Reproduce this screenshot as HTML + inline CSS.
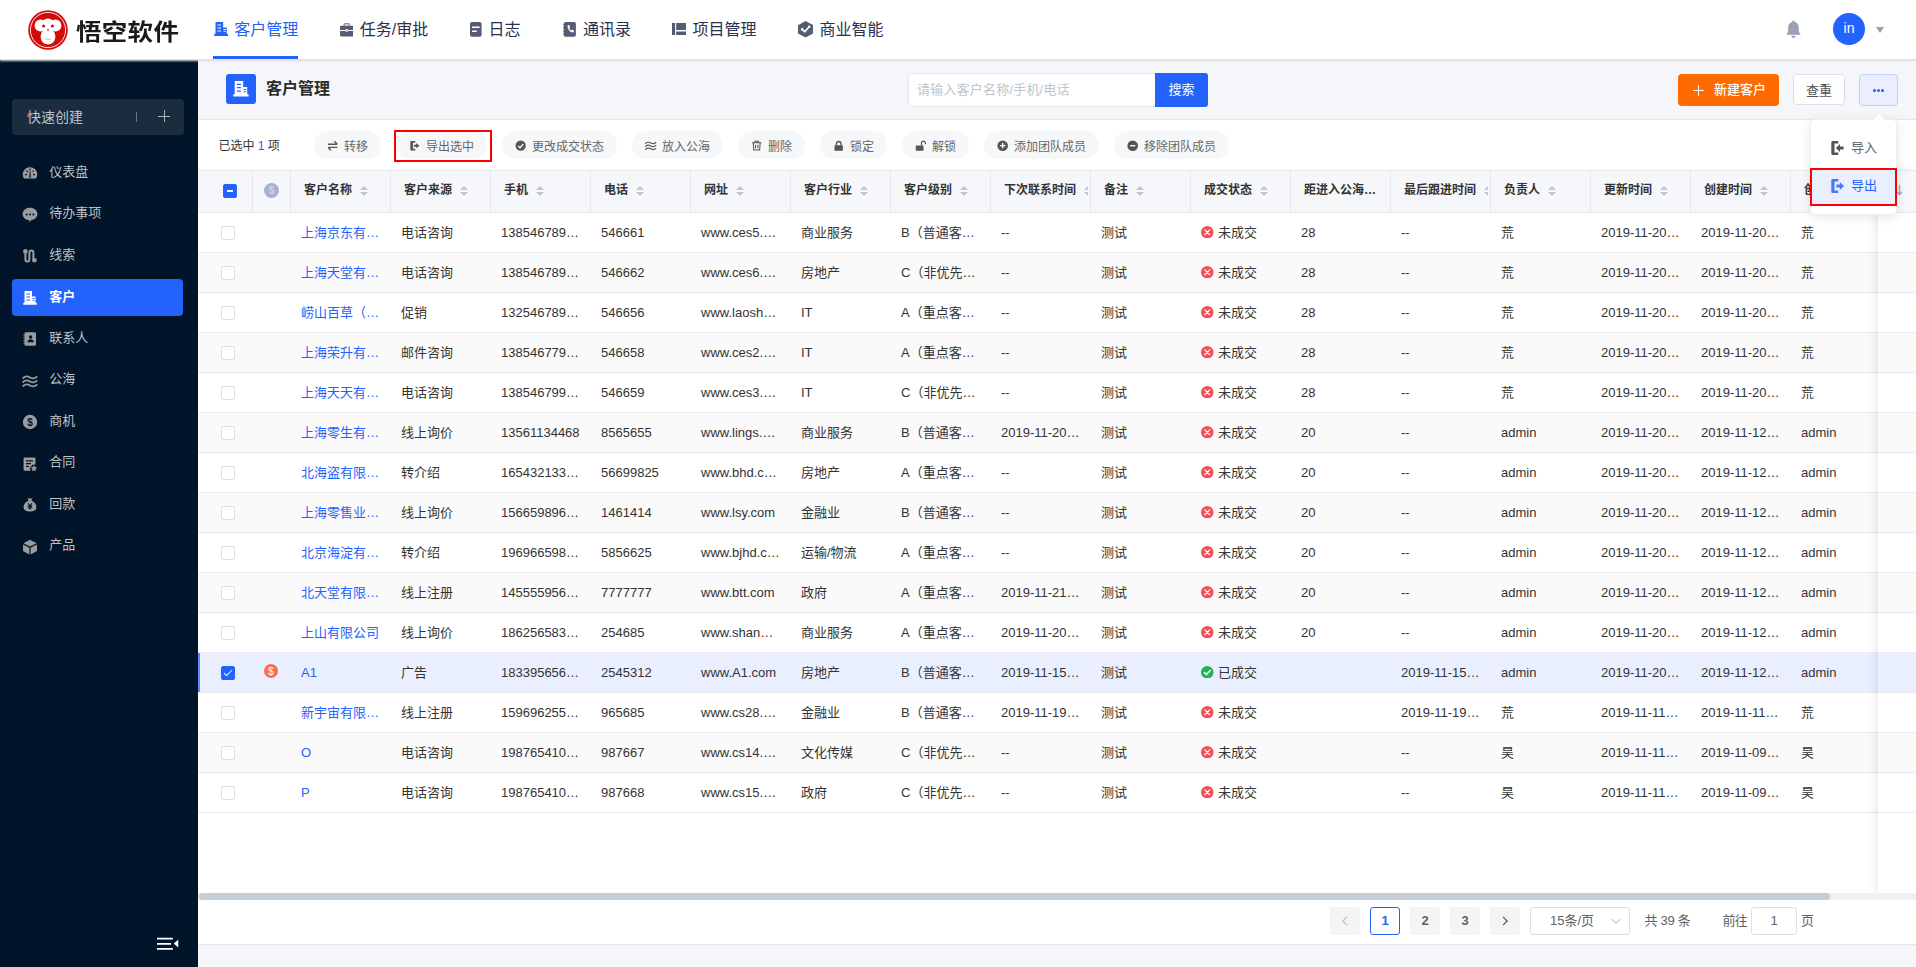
<!DOCTYPE html>
<html lang="zh-CN">
<head>
<meta charset="utf-8">
<title>客户管理</title>
<style>
*{box-sizing:border-box;margin:0;padding:0}
html,body{width:1916px;height:967px;overflow:hidden;background:#f5f6f9}
body{font-family:"Liberation Sans","Noto Sans CJK SC",sans-serif;font-size:13px;color:#333;position:relative}
svg{display:block}
i{font-style:normal}
/* top nav */
#nav{position:absolute;left:0;top:0;width:1916px;height:60px;background:#fff;z-index:20;border-bottom:1px solid #e1e3e8;box-shadow:0 1px 2px #dbdbdb}
#logo{position:absolute;left:28px;top:9.5px;width:40px;height:40px}
#brand{position:absolute;left:76px;top:12.5px;height:36px;line-height:36px;font-size:25.5px;font-weight:700;color:#1a1a1a;letter-spacing:0.3px;transform:scaleY(0.87);transform-origin:0 46%;white-space:nowrap;font-family:"Noto Sans CJK SC","Liberation Sans",sans-serif}
.ni{position:absolute;top:0;height:60px;line-height:58px;font-size:16px;color:#2a304d;white-space:nowrap;display:flex;align-items:center}
.ni svg{flex:none}
.ni.on{color:#2362fb}
.ni.on:after{content:"";position:absolute;left:0;right:0;top:56px;height:3px;background:#2362fb}
#bell{position:absolute;left:1784px;top:20px;width:19px;height:19px}
#avatar{position:absolute;left:1833px;top:13px;width:32px;height:32px;border-radius:50%;background:#2362fb;color:#fff;font-size:14px;line-height:31px;text-align:center}
#ucaret{position:absolute;left:1875.5px;top:27px;width:0;height:0;border:4.8px solid transparent;border-top:6px solid #a0a0a0;border-bottom:none}
/* sidebar */
#side{position:absolute;left:0;top:60px;width:198px;height:907px;background:#001529;z-index:10}
#quick{position:absolute;left:12px;top:39px;width:172px;height:36px;border-radius:4px;background:#1a2c3e;color:#bfc4ca;font-size:14px;line-height:36px;padding-left:15px}
#quick .div{position:absolute;left:124px;top:13px;width:1px;height:10px;background:#6d7883}
#quick .plus{position:absolute;left:146px;top:11.3px;width:12px;height:12px}
#quick .plus:before{content:"";position:absolute;left:0;top:5.5px;width:12px;height:1px;background:#a9afb6}
#quick .plus:after{content:"";position:absolute;left:5.5px;top:0;width:1px;height:12px;background:#a9afb6}
.mi{position:absolute;left:12px;width:171px;height:37px;border-radius:4px;color:#bcc1c7;font-size:13px;line-height:36px;padding-left:37.3px;white-space:nowrap}
.mi svg{position:absolute;left:10px;top:11.5px;width:16px;height:16px}
.mi.on{background:#2362fb;color:#fff;font-weight:bold}
.mi.on svg{left:11.3px;top:12px;width:14.2px;height:14.2px}
#collapse{position:absolute;left:157px;top:877.3px;width:22px;height:14px}
/* content */
#hd{position:absolute;left:198px;top:60px;width:1718px;height:60px;background:#f5f6f9;border-bottom:1px solid #e6e6e6}
#hdicon{position:absolute;left:28px;top:14px;width:30px;height:30px;border-radius:3px;background:#2362fb}
#hdicon svg{position:absolute;left:7px;top:7px;width:16px;height:16px}
#hdtitle{position:absolute;left:68px;top:14px;line-height:30px;font-size:16px;font-weight:bold;color:#2a2a2a}
#search{position:absolute;left:710px;top:13px;width:248px;height:34px;border:1px solid #e4e7ed;border-right:none;border-radius:4px 0 0 4px;background:#fff;color:#c0c4cc;font-size:13px;line-height:32px;padding-left:8px;letter-spacing:.2px}
#sbtn{position:absolute;left:957px;top:13px;width:53px;height:34px;border-radius:0 3px 3px 0;background:#2362fb;color:#fff;font-size:13px;font-weight:400;line-height:33px;text-align:center}
#newbtn{position:absolute;left:1480px;top:14px;width:101px;height:32px;border-radius:4px;background:#ff6a00;color:#fff;font-size:13px;font-weight:500;line-height:32px;padding-left:36px}
#newbtn:before{content:"";position:absolute;left:14.5px;top:15.5px;width:11px;height:1px;background:#fff}
#newbtn:after{content:"";position:absolute;left:19.5px;top:10.5px;width:1px;height:11px;background:#fff}
#dupbtn{position:absolute;left:1595px;top:14px;width:52px;height:31px;border-radius:4px;border:1px solid #dcdfe6;background:#fff;color:#555;font-size:13px;line-height:31px;text-align:center}
#morebtn{position:absolute;left:1661px;top:14px;width:39px;height:32px;border-radius:4px;border:1px solid #bdd0fe;background:#e9effe}
#morebtn i{position:absolute;top:14px;width:3px;height:3px;border-radius:50%;background:#2362fb}
/* card */
#card{position:absolute;left:198px;top:120px;width:1718px;height:825px;background:#fff;border-bottom:1px solid #e6e6e6;overflow:hidden}
#selbar{position:absolute;left:0;top:0;height:51px;width:1718px;font-size:12px;color:#333}
#selbar .cnt{position:absolute;left:20.5px;top:17.5px;line-height:17px;white-space:nowrap}
#selbar .cnt b{font-weight:normal;color:#2362fb}
.pill{position:absolute;top:11px;height:28px;border-radius:14px;background:#f6f7f9;color:#666;font-size:12px;line-height:22px;padding:4px 13px 0;white-space:nowrap;display:flex;align-items:center}
.pill svg{width:11.4px;height:11.4px;margin-left:.3px;margin-right:5.3px;margin-top:-2px;flex:none}
#redbox1{position:absolute;left:195.5px;top:9.5px;width:98px;height:32px;border:2px solid #fe0000}
/* table */
#tbl{position:absolute;left:0;top:50px;width:1718px;height:642px}
.thead,.tr{display:flex;width:2000px}
.thead{height:43px;background:#f5f7fa;border-top:1px solid #e6e9ef;border-bottom:1px solid #e6e9ef}
.th{width:100px;flex:none;height:41px;border-right:1px solid #e6e9ef;font-size:12px;font-weight:bold;color:#333;padding-left:13px;display:flex;align-items:center}
.th .cell{width:84px;height:39px;line-height:37px;padding-bottom:2px;overflow:hidden;white-space:nowrap;display:flex;align-items:center}
.th.c0{width:55px;padding-left:25px}
.th.c1{width:38px;padding-left:11px}
.caret{display:inline-block;position:relative;width:8px;height:10px;margin-left:8px;margin-top:0;flex:none}
.caret .up{position:absolute;left:0;top:0;border:4px solid transparent;border-bottom:4px solid #c0c4cc;border-top:none}
.caret .dn{position:absolute;left:0;top:6px;border:4px solid transparent;border-top:4px solid #c0c4cc;border-bottom:none}
.tr{height:40px;border-bottom:1px solid #e9ebf0;background:#fff}
.tr.stripe{background:#fafafa}
.tr.sel{background:#e9efff;box-shadow:inset 2px 0 0 #5b8afc}
.tr.sel2{background:#e9efff}
.td{width:100px;flex:none;height:39px;line-height:39px;padding-left:10px;white-space:nowrap;overflow:hidden;font-size:13px;color:#333;display:flex;align-items:center}
.td.c0{width:55px;padding-left:23px}
.td.c1{width:38px;padding-left:11px}
.td.lk{color:#2362fb}
.st{width:12.5px;height:12.5px;margin-right:4.5px;margin-top:-1px;flex:none}
.dollar{width:15px;height:15px;margin-top:-2px;margin-left:-0.5px}
.dollar2{width:14px;height:14px;margin-top:-4px}
.cb{display:block;width:14px;height:14px;border:1px solid #dcdfe6;border-radius:2px;background:#fff;position:relative;margin-top:1px}
.cb.ind,.cb.chk{background:#2362fb;border-color:#2362fb}
.cb.ind{margin-top:-2px}
.cb.ind:after{content:"";position:absolute;left:3px;top:5px;width:6px;height:2px;background:#fff}
.cb.chk:after{content:"";position:absolute;left:4px;top:1px;width:3px;height:7px;border:solid #fff;border-width:0 1.5px 1.5px 0;transform:rotate(45deg)}
/* fixed right column */
#fixr{position:absolute;left:1680px;top:50px;width:38px;height:723px;background:#fff;box-shadow:-3px 0 8px rgba(0,0,0,.08);overflow:visible}
#fixr .tr{width:38px}
#fixr .seticon{position:absolute;left:13px;top:14px;width:12px;height:12px}
#fixr .h{height:43px;background:#f5f7fa;border-top:1px solid #e6e9ef;border-bottom:1px solid #e6e9ef}
/* scrollbar */
#sbar{position:absolute;left:0;top:773px;width:1718px;height:7px;background:#f0f1f3}
#sbar i{position:absolute;left:1px;top:0;width:1631px;height:7px;border-radius:4px;background:#c4cdd7}
/* pagination */
#pg{position:absolute;left:0;top:787px;width:1718px;height:28px;font-size:13px;color:#606266}
.pb{position:absolute;top:0;width:30px;height:28px;border-radius:2px;background:#f4f4f5;color:#606266;font-weight:bold;text-align:center;line-height:28px}
.pb.on{background:#fff;border:1px solid #2362fb;color:#2362fb;line-height:26px;border-radius:3px}
.pb svg{position:absolute;left:11px;top:9px;width:8px;height:10px}
#psel{position:absolute;left:1332px;top:0;width:100px;height:28px;border:1px solid #dcdfe6;border-radius:3px;line-height:26px;padding-left:19px;color:#606266}
#psel svg{position:absolute;left:80px;top:10px;width:10px;height:7px}
#ptotal{position:absolute;left:1446.5px;top:0;line-height:28px;white-space:nowrap;letter-spacing:-0.3px}
#pgo{position:absolute;left:1524.5px;top:0;line-height:28px;white-space:nowrap;letter-spacing:-0.8px}
#pinp{position:absolute;left:1553px;top:0;width:46px;height:28px;border:1px solid #dcdfe6;border-radius:3px;text-align:center;line-height:26px}
#pye{position:absolute;left:1603px;top:0;line-height:28px}
/* popover */
#pop{position:absolute;left:1810px;top:119px;width:87px;height:96px;background:#fff;border-radius:4px;box-shadow:0 2px 12px rgba(0,0,0,.1);border:1px solid #ebeef5;z-index:30;font-size:13px}
#pop .arrow{position:absolute;left:62px;top:-6px;width:0;height:0;border:6px solid transparent;border-top:none;border-bottom:6px solid #fff;filter:drop-shadow(0 -1px 0 #ebeef5)}
.pi{position:absolute;left:-1px;width:87px;height:38px;line-height:38px;padding-left:41px;color:#606266;white-space:nowrap}
.pi svg{position:absolute;left:21px;top:12px;width:13px;height:14px}
.pi.on{background:#e9effe;color:#2362fb;border:2px solid #fe0000;line-height:32px;padding-left:39px}
.pi.on svg{left:19px;top:9px}
</style>
</head>
<body>
<div id="nav">
  <svg id="logo" viewBox="0 0 40 40">
    <circle cx="20" cy="20" r="19.8" fill="#d20a0a"/>
    <circle cx="20" cy="20" r="17.6" fill="none" stroke="#fff" stroke-width="0.9"/>
    <circle cx="12.6" cy="15.6" r="6" fill="#fff"/>
    <circle cx="27.4" cy="15.6" r="6" fill="#fff"/>
    <circle cx="20" cy="15.6" r="7" fill="#fff"/>
    <ellipse cx="20" cy="26.5" rx="7.4" ry="8" fill="#fff"/>
    <circle cx="15.6" cy="16" r="1.5" fill="#d20a0a"/>
    <circle cx="24.4" cy="16" r="1.5" fill="#d20a0a"/>
    <circle cx="20" cy="19.8" r="0.9" fill="#d20a0a"/>
    <path d="M17 28.4q3 3 6 0" stroke="#e89a9a" stroke-width="0.9" fill="none" stroke-linecap="round"/>
  </svg>
  <div id="brand">悟空软件</div>
  <div class="ni on" style="left:213px"><svg style="margin-left:1.3px;width:14.3px;height:14.3px;margin-right:5.6px;margin-top:-1px" viewBox="0 0 16 16"><path fill="#2362fb" d="M1.7 .1h8.5v6h4v7.1h1.4v2.4H.3v-2.4h1.4zM3.8 2.8v1.2h4.1V2.8zm0 3.3v1.2h4.1V6.1zm0 3.4v1.2h4.1V9.5zm6.8-1.6v1h2.6v-1zm0 2.4v1h2.6v-1z"/></svg>客户管理</div>
  <div class="ni" style="left:339px"><svg style="margin-left:.9px;width:13.4px;height:13.4px;margin-right:6.5px;margin-top:0" viewBox="0 0 14 14"><path fill="none" stroke="#8a8ea3" stroke-width="1.5" d="M4.4 3V1.6a.8.8 0 0 1 .8-.8h3.6a.8.8 0 0 1 .8.8V3"/><path fill="#555a75" d="M1.2 2.8h11.6A1.2 1.2 0 0 1 14 4v3.3H0V4a1.2 1.2 0 0 1 1.2-1.2zM0 8.3h14v4.5a1.2 1.2 0 0 1-1.2 1.2H1.2A1.2 1.2 0 0 1 0 12.8z"/><circle cx="7" cy="7.8" r="1.5" fill="#fff"/><circle cx="7" cy="7.8" r=".6" fill="#555a75"/></svg>任务/审批</div>
  <div class="ni" style="left:469px"><svg style="margin-left:1.3px;width:11.6px;height:14.7px;margin-right:6.5px;margin-top:-1px" viewBox="0 0 11.6 14.7"><rect width="11.6" height="14.7" rx="2" fill="#555a75"/><path stroke="#fff" stroke-width="1.5" d="M2 5.3h7.6M2 9.3h4.8"/></svg>日志</div>
  <div class="ni" style="left:562px"><svg style="margin-left:1px;width:12.9px;height:14.7px;margin-right:7px;margin-top:-1px" viewBox="0 0 12.9 14.7"><rect x=".8" width="12.1" height="14.7" rx="1.8" fill="#555a75"/><path stroke="#555a75" stroke-width="1" d="M0 2.6h2M0 5.8h2M0 9h2M0 12.2h2"/><path fill="#fff" d="M4.6 3.4l1.6-.5 1 2.2-1 .8c.4 1.1 1.1 2 2 2.6l.9-.9 2 1.2-.7 1.6C7.3 10.6 4.2 7 4.6 3.4z"/></svg>通讯录</div>
  <div class="ni" style="left:671px"><svg style="margin-left:.7px;width:14.4px;height:12px;margin-right:6.4px;margin-top:-1.5px" viewBox="0 0 14.4 12"><path fill="#555a75" d="M0 0h3.1v12H0zM4.2 0h10.2v7H4.2zM4.2 8.4h10.2V12H4.2z"/></svg>项目管理</div>
  <div class="ni" style="left:797px"><svg style="margin-left:1px;width:15.1px;height:16.6px;margin-right:6.3px;margin-top:-1px" viewBox="0 0 15.1 16.6"><path fill="#555a75" d="M7.55 0l7.55 4.15v8.3L7.55 16.6 0 12.45v-8.3z"/><path fill="none" stroke="#fff" stroke-width="1.7" stroke-linecap="round" stroke-linejoin="round" d="M4.2 8.4l2.6 2.4 4.4-5"/><circle cx="4.2" cy="8.4" r="1.3" fill="#fff"/><circle cx="11.2" cy="5.8" r="1.3" fill="#fff"/></svg>商业智能</div>
  <svg id="bell" viewBox="0 0 18 19"><path fill="#9aa1b5" d="M9 .8c.8 0 1.4.6 1.4 1.3 2.4.7 3.9 2.8 3.9 5.3v3.7c0 .9.5 1.8 1.4 2.4.5.3.4 1.2-.3 1.2H2.6c-.7 0-.8-.9-.3-1.2.9-.6 1.4-1.5 1.4-2.4V7.4c0-2.5 1.5-4.6 3.9-5.3C7.6 1.4 8.2.8 9 .8zM6.8 15.8h4.4c0 1.2-1 2.2-2.2 2.2s-2.2-1-2.2-2.2z"/></svg>
  <div id="avatar">in</div>
  <div id="ucaret"></div>
</div>

<div id="side">
  <div id="quick">快速创建<span class="div"></span><span class="plus"></span></div>
  <div class="mi" style="top:93.5px"><svg viewBox="0 0 16 16"><path fill="#9c9c9e" d="M8 2.2a7.2 7.2 0 0 1 7.2 7.2c0 1.5-.4 2.8-1.2 4H2A7.2 7.2 0 0 1 8 2.2z"/><path stroke="#001529" stroke-width="1.1" d="M8 3.4v2M3 9.6h2M11 9.6h2M4.4 5.6l1.4 1.4M11.6 5.6l-1 1"/><path fill="#001529" d="M7.2 12.6l.4-6h.8l.4 6z"/></svg>仪表盘</div>
  <div class="mi" style="top:135px"><svg viewBox="0 0 16 16"><path fill="#9c9c9e" d="M8 .8c4.1 0 7.4 2.7 7.4 6.2 0 3.2-2.8 5.8-6.4 6.1L8 15.3l-1-2.2C3.4 12.8.6 10.2.6 7 .6 3.5 3.9.8 8 .8z"/><circle cx="4.6" cy="7.6" r="1" fill="#001529"/><circle cx="8" cy="7.6" r="1" fill="#001529"/><circle cx="11.4" cy="7.6" r="1" fill="#001529"/></svg>待办事项</div>
  <div class="mi" style="top:176.5px"><svg viewBox="0 0 16 16"><path fill="none" stroke="#9c9c9e" stroke-width="2" d="M3.4 4v7.5a2 2 0 0 0 4 0V4.5a2 2 0 0 1 4 0v7"/><circle cx="3.4" cy="3.4" r="2.3" fill="#9c9c9e"/><circle cx="12.4" cy="12.2" r="2.3" fill="#9c9c9e"/></svg>线索</div>
  <div class="mi on" style="top:219px"><svg viewBox="0 0 16 16"><path fill="#fff" d="M1.7 .1h8.5v6h4v7.1h1.4v2.4H.3v-2.4h1.4zM3.8 2.8v1.2h4.1V2.8zm0 3.3v1.2h4.1V6.1zm0 3.4v1.2h4.1V9.5zm6.8-1.6v1h2.6v-1zm0 2.4v1h2.6v-1z"/></svg>客户</div>
  <div class="mi" style="top:259.5px"><svg viewBox="0 0 16 16"><path fill="#9c9c9e" d="M4 1.2h8.6a1.4 1.4 0 0 1 1.4 1.4v10.8a1.4 1.4 0 0 1-1.4 1.4H4a1.4 1.4 0 0 1-1.4-1.4V2.6A1.4 1.4 0 0 1 4 1.2z"/><circle cx="8.6" cy="6" r="1.7" fill="#001529"/><path fill="#001529" d="M5.4 11.2c0-1.9 1.4-3 3.2-3s3.2 1.1 3.2 3z"/><path stroke="#9c9c9e" stroke-width="1" d="M1.4 4h2M1.4 6.7h2M1.4 9.4h2M1.4 12h2"/></svg>联系人</div>
  <div class="mi" style="top:301px"><svg viewBox="0 0 16 16"><path fill="none" stroke="#9c9c9e" stroke-width="1.7" stroke-linecap="round" d="M1.2 5c2.2-2 4.5-2 6.8-.6s4.6 1.4 6.8-.6M1.2 9c2.2-2 4.5-2 6.8-.6s4.6 1.4 6.8-.6M1.2 13c2.2-2 4.5-2 6.8-.6s4.6 1.4 6.8-.6"/></svg>公海</div>
  <div class="mi" style="top:342.5px"><svg viewBox="0 0 16 16"><circle cx="8" cy="8" r="7.2" fill="#9c9c9e"/><text x="8" y="11.6" font-size="10" font-weight="bold" text-anchor="middle" fill="#001529" font-family="Liberation Sans, sans-serif">$</text></svg>商机</div>
  <div class="mi" style="top:384px"><svg viewBox="0 0 16 16"><path fill="#9c9c9e" d="M2.6 1.4h9.8a1 1 0 0 1 1 1v6.2l-3 .2-2.4 3 .6 3H2.6a1 1 0 0 1-1-1V2.4a1 1 0 0 1 1-1z"/><path stroke="#001529" stroke-width="1.2" d="M4 4.8h7M4 7.6h5M4 10.4h3"/><path fill="#9c9c9e" d="M12 9l1 2.1 2.3.3-1.7 1.6.4 2.3-2-1.1-2 1.1.4-2.3-1.7-1.6 2.3-.3z"/></svg>合同</div>
  <div class="mi" style="top:425.5px"><svg viewBox="0 0 16 16"><path fill="#9c9c9e" d="M5.6 1.4h4.8l-1 2.4c3 1 5 3.6 5 6.4 0 2.6-2 4.4-6.4 4.4S1.6 12.8 1.6 10.2c0-2.8 2-5.4 5-6.4z"/><path stroke="#001529" stroke-width="1.1" fill="none" d="M6 6.4l2 2.4 2-2.4M8 8.8v3.6M5.8 9.4h4.4M5.8 11h4.4"/></svg>回款</div>
  <div class="mi" style="top:467px"><svg viewBox="0 0 16 16"><path fill="#9c9c9e" d="M8 .8l6.6 3.4L8 7.6 1.4 4.2zM1 5.4l6.4 3.3v6.7L1 12zM15 5.4V12l-6.4 3.4V8.7z"/></svg>产品</div>
  <svg id="collapse" viewBox="0 0 22 14"><path fill="#fff" d="M0 .8h15.8v1.7H0zM0 6h14v1.7H0zM0 11h15.8v1.7H0zM21.3 2.7v7.8L16.7 6.6z"/></svg>
</div>

<div id="hd">
  <div id="hdicon"><svg viewBox="0 0 16 16"><path fill="#fff" d="M1.7 .1h8.5v6h4v7.1h1.4v2.4H.3v-2.4h1.4zM3.8 2.8v1.2h4.1V2.8zm0 3.3v1.2h4.1V6.1zm0 3.4v1.2h4.1V9.5zm6.8-1.6v1h2.6v-1zm0 2.4v1h2.6v-1z"/></svg></div>
  <div id="hdtitle">客户管理</div>
  <div id="search">请输入客户名称/手机/电话</div>
  <div id="sbtn">搜索</div>
  <div id="newbtn">新建客户</div>
  <div id="dupbtn">查重</div>
  <div id="morebtn"><i style="left:13px"></i><i style="left:17px"></i><i style="left:21px"></i></div>
</div>

<div id="card">
  <div id="selbar">
    <div class="cnt">已选中 <b>1</b> 项</div>
    <div class="pill" style="left:116px"><svg viewBox="0 0 12 12"><path fill="none" stroke="#555" stroke-width="1.5" d="M1 4.4h9.8M7.8 1.4l3 3M11 7.8H1.2M4.2 10.8l-3-3"/></svg>转移</div>
    <div class="pill" style="left:198px"><svg viewBox="0 0 12 12"><path fill="#555" d="M2.4 1h4.2v1.8H4.2v6.4h2.4V11H2.4a1 1 0 0 1-1-1V2a1 1 0 0 1 1-1zM7.6 3.2L11 6 7.6 8.8V7H5.2V5h2.4z"/></svg>导出选中</div>
    <div class="pill" style="left:304px"><svg viewBox="0 0 12 12"><circle cx="6" cy="6" r="5.4" fill="#555"/><path fill="none" stroke="#fff" stroke-width="1.4" d="M3.4 6.2l1.9 1.9 3.4-3.8"/></svg>更改成交状态</div>
    <div class="pill" style="left:434px"><svg viewBox="0 0 12 12"><path fill="none" stroke="#555" stroke-width="1.2" stroke-linecap="round" d="M.6 3.6c1.7-1.6 3.5-1.6 5.4-.5s3.7 1.1 5.4-.5M.6 6.7c1.7-1.6 3.5-1.6 5.4-.5s3.7 1.1 5.4-.5M.6 9.8c1.7-1.6 3.5-1.6 5.4-.5s3.7 1.1 5.4-.5"/></svg>放入公海</div>
    <div class="pill" style="left:540px"><svg viewBox="0 0 12 12"><path fill="none" stroke="#555" stroke-width="1.1" d="M1 3h10M4.2 3V1.4h3.6V3M2.4 3l.5 7.6h6.2L9.6 3M4.8 5v3.8M7.2 5v3.8"/></svg>删除</div>
    <div class="pill" style="left:622px"><svg viewBox="0 0 12 12"><path fill="#555" d="M2.2 5.6h7.6a.6.6 0 0 1 .6.6v4.6a.6.6 0 0 1-.6.6H2.2a.6.6 0 0 1-.6-.6V6.2a.6.6 0 0 1 .6-.6z"/><path fill="none" stroke="#555" stroke-width="1.4" d="M3.6 5.8V4a2.4 2.4 0 0 1 4.8 0v1.8"/></svg>锁定</div>
    <div class="pill" style="left:704px"><svg viewBox="0 0 12 12"><path fill="#555" d="M1.4 5.8h7a.6.6 0 0 1 .6.6v4.2a.6.6 0 0 1-.6.6h-7a.6.6 0 0 1-.6-.6V6.4a.6.6 0 0 1 .6-.6z"/><path fill="none" stroke="#555" stroke-width="1.3" d="M6.8 5.8V3.4a2.1 2.1 0 0 1 4.2 0v1"/></svg>解锁</div>
    <div class="pill" style="left:786px"><svg viewBox="0 0 12 12"><circle cx="6" cy="6" r="5.6" fill="#555"/><path stroke="#fff" stroke-width="1.4" d="M3.2 6h5.6M6 3.2v5.6"/></svg>添加团队成员</div>
    <div class="pill" style="left:916px"><svg viewBox="0 0 12 12"><circle cx="6" cy="6" r="5.6" fill="#555"/><path stroke="#fff" stroke-width="1.4" d="M3.2 6h5.6"/></svg>移除团队成员</div>
    <div id="redbox1"></div>
  </div>
  <div id="tbl">
<div class="thead">
<div class="th c0"><span class="cb ind"></span></div>
<div class="th c1"><svg class="dollar" viewBox="0 0 16 16"><circle cx="8" cy="8" r="8" fill="#a6b0d0"/><text x="8" y="12" font-size="11" text-anchor="middle" fill="#cdd3e6" font-family="Liberation Sans, sans-serif">$</text></svg></div>
<div class="th"><div class="cell"><span class="ht">客户名称</span><span class="caret"><i class="up"></i><i class="dn"></i></span></div></div>
<div class="th"><div class="cell"><span class="ht">客户来源</span><span class="caret"><i class="up"></i><i class="dn"></i></span></div></div>
<div class="th"><div class="cell"><span class="ht">手机</span><span class="caret"><i class="up"></i><i class="dn"></i></span></div></div>
<div class="th"><div class="cell"><span class="ht">电话</span><span class="caret"><i class="up"></i><i class="dn"></i></span></div></div>
<div class="th"><div class="cell"><span class="ht">网址</span><span class="caret"><i class="up"></i><i class="dn"></i></span></div></div>
<div class="th"><div class="cell"><span class="ht">客户行业</span><span class="caret"><i class="up"></i><i class="dn"></i></span></div></div>
<div class="th"><div class="cell"><span class="ht">客户级别</span><span class="caret"><i class="up"></i><i class="dn"></i></span></div></div>
<div class="th"><div class="cell"><span class="ht">下次联系时间</span><span class="caret"><i class="up"></i><i class="dn"></i></span></div></div>
<div class="th"><div class="cell"><span class="ht">备注</span><span class="caret"><i class="up"></i><i class="dn"></i></span></div></div>
<div class="th"><div class="cell"><span class="ht">成交状态</span><span class="caret"><i class="up"></i><i class="dn"></i></span></div></div>
<div class="th"><div class="cell"><span class="ht">距进入公海…</span></div></div>
<div class="th"><div class="cell"><span class="ht">最后跟进时间</span><span class="caret"><i class="up"></i><i class="dn"></i></span></div></div>
<div class="th"><div class="cell"><span class="ht">负责人</span><span class="caret"><i class="up"></i><i class="dn"></i></span></div></div>
<div class="th"><div class="cell"><span class="ht">更新时间</span><span class="caret"><i class="up"></i><i class="dn"></i></span></div></div>
<div class="th"><div class="cell"><span class="ht">创建时间</span><span class="caret"><i class="up"></i><i class="dn"></i></span></div></div>
<div class="th"><div class="cell"><span class="ht">创建人</span><span class="caret"><i class="up"></i><i class="dn"></i></span></div></div>
</div>
<div class="tr">
<div class="td c0"><span class="cb"></span></div>
<div class="td c1"></div>
<div class="td lk">上海京东有…</div>
<div class="td">电话咨询</div>
<div class="td">138546789…</div>
<div class="td">546661</div>
<div class="td">www.ces5.…</div>
<div class="td">商业服务</div>
<div class="td">B（普通客…</div>
<div class="td">--</div>
<div class="td">测试</div>
<div class="td"><svg class="st" viewBox="0 0 12 12"><circle cx="6" cy="6" r="6" fill="#f5505a"/><path d="M3.7 3.7l4.6 4.6M8.3 3.7L3.7 8.3" stroke="#fff" stroke-width="1.3" stroke-linecap="round"/></svg><span>未成交</span></div>
<div class="td">28</div>
<div class="td">--</div>
<div class="td">荒</div>
<div class="td">2019-11-20…</div>
<div class="td">2019-11-20…</div>
<div class="td">荒</div>
</div>
<div class="tr stripe">
<div class="td c0"><span class="cb"></span></div>
<div class="td c1"></div>
<div class="td lk">上海天堂有…</div>
<div class="td">电话咨询</div>
<div class="td">138546789…</div>
<div class="td">546662</div>
<div class="td">www.ces6.…</div>
<div class="td">房地产</div>
<div class="td">C（非优先…</div>
<div class="td">--</div>
<div class="td">测试</div>
<div class="td"><svg class="st" viewBox="0 0 12 12"><circle cx="6" cy="6" r="6" fill="#f5505a"/><path d="M3.7 3.7l4.6 4.6M8.3 3.7L3.7 8.3" stroke="#fff" stroke-width="1.3" stroke-linecap="round"/></svg><span>未成交</span></div>
<div class="td">28</div>
<div class="td">--</div>
<div class="td">荒</div>
<div class="td">2019-11-20…</div>
<div class="td">2019-11-20…</div>
<div class="td">荒</div>
</div>
<div class="tr">
<div class="td c0"><span class="cb"></span></div>
<div class="td c1"></div>
<div class="td lk">崂山百草（…</div>
<div class="td">促销</div>
<div class="td">132546789…</div>
<div class="td">546656</div>
<div class="td">www.laosh…</div>
<div class="td">IT</div>
<div class="td">A（重点客…</div>
<div class="td">--</div>
<div class="td">测试</div>
<div class="td"><svg class="st" viewBox="0 0 12 12"><circle cx="6" cy="6" r="6" fill="#f5505a"/><path d="M3.7 3.7l4.6 4.6M8.3 3.7L3.7 8.3" stroke="#fff" stroke-width="1.3" stroke-linecap="round"/></svg><span>未成交</span></div>
<div class="td">28</div>
<div class="td">--</div>
<div class="td">荒</div>
<div class="td">2019-11-20…</div>
<div class="td">2019-11-20…</div>
<div class="td">荒</div>
</div>
<div class="tr stripe">
<div class="td c0"><span class="cb"></span></div>
<div class="td c1"></div>
<div class="td lk">上海荣升有…</div>
<div class="td">邮件咨询</div>
<div class="td">138546779…</div>
<div class="td">546658</div>
<div class="td">www.ces2.…</div>
<div class="td">IT</div>
<div class="td">A（重点客…</div>
<div class="td">--</div>
<div class="td">测试</div>
<div class="td"><svg class="st" viewBox="0 0 12 12"><circle cx="6" cy="6" r="6" fill="#f5505a"/><path d="M3.7 3.7l4.6 4.6M8.3 3.7L3.7 8.3" stroke="#fff" stroke-width="1.3" stroke-linecap="round"/></svg><span>未成交</span></div>
<div class="td">28</div>
<div class="td">--</div>
<div class="td">荒</div>
<div class="td">2019-11-20…</div>
<div class="td">2019-11-20…</div>
<div class="td">荒</div>
</div>
<div class="tr">
<div class="td c0"><span class="cb"></span></div>
<div class="td c1"></div>
<div class="td lk">上海天天有…</div>
<div class="td">电话咨询</div>
<div class="td">138546799…</div>
<div class="td">546659</div>
<div class="td">www.ces3.…</div>
<div class="td">IT</div>
<div class="td">C（非优先…</div>
<div class="td">--</div>
<div class="td">测试</div>
<div class="td"><svg class="st" viewBox="0 0 12 12"><circle cx="6" cy="6" r="6" fill="#f5505a"/><path d="M3.7 3.7l4.6 4.6M8.3 3.7L3.7 8.3" stroke="#fff" stroke-width="1.3" stroke-linecap="round"/></svg><span>未成交</span></div>
<div class="td">28</div>
<div class="td">--</div>
<div class="td">荒</div>
<div class="td">2019-11-20…</div>
<div class="td">2019-11-20…</div>
<div class="td">荒</div>
</div>
<div class="tr stripe">
<div class="td c0"><span class="cb"></span></div>
<div class="td c1"></div>
<div class="td lk">上海零生有…</div>
<div class="td">线上询价</div>
<div class="td">13561134468</div>
<div class="td">8565655</div>
<div class="td">www.lings.…</div>
<div class="td">商业服务</div>
<div class="td">B（普通客…</div>
<div class="td">2019-11-20…</div>
<div class="td">测试</div>
<div class="td"><svg class="st" viewBox="0 0 12 12"><circle cx="6" cy="6" r="6" fill="#f5505a"/><path d="M3.7 3.7l4.6 4.6M8.3 3.7L3.7 8.3" stroke="#fff" stroke-width="1.3" stroke-linecap="round"/></svg><span>未成交</span></div>
<div class="td">20</div>
<div class="td">--</div>
<div class="td">admin</div>
<div class="td">2019-11-20…</div>
<div class="td">2019-11-12…</div>
<div class="td">admin</div>
</div>
<div class="tr">
<div class="td c0"><span class="cb"></span></div>
<div class="td c1"></div>
<div class="td lk">北海盗有限…</div>
<div class="td">转介绍</div>
<div class="td">165432133…</div>
<div class="td">56699825</div>
<div class="td">www.bhd.c…</div>
<div class="td">房地产</div>
<div class="td">A（重点客…</div>
<div class="td">--</div>
<div class="td">测试</div>
<div class="td"><svg class="st" viewBox="0 0 12 12"><circle cx="6" cy="6" r="6" fill="#f5505a"/><path d="M3.7 3.7l4.6 4.6M8.3 3.7L3.7 8.3" stroke="#fff" stroke-width="1.3" stroke-linecap="round"/></svg><span>未成交</span></div>
<div class="td">20</div>
<div class="td">--</div>
<div class="td">admin</div>
<div class="td">2019-11-20…</div>
<div class="td">2019-11-12…</div>
<div class="td">admin</div>
</div>
<div class="tr stripe">
<div class="td c0"><span class="cb"></span></div>
<div class="td c1"></div>
<div class="td lk">上海零售业…</div>
<div class="td">线上询价</div>
<div class="td">156659896…</div>
<div class="td">1461414</div>
<div class="td">www.lsy.com</div>
<div class="td">金融业</div>
<div class="td">B（普通客…</div>
<div class="td">--</div>
<div class="td">测试</div>
<div class="td"><svg class="st" viewBox="0 0 12 12"><circle cx="6" cy="6" r="6" fill="#f5505a"/><path d="M3.7 3.7l4.6 4.6M8.3 3.7L3.7 8.3" stroke="#fff" stroke-width="1.3" stroke-linecap="round"/></svg><span>未成交</span></div>
<div class="td">20</div>
<div class="td">--</div>
<div class="td">admin</div>
<div class="td">2019-11-20…</div>
<div class="td">2019-11-12…</div>
<div class="td">admin</div>
</div>
<div class="tr">
<div class="td c0"><span class="cb"></span></div>
<div class="td c1"></div>
<div class="td lk">北京海淀有…</div>
<div class="td">转介绍</div>
<div class="td">196966598…</div>
<div class="td">5856625</div>
<div class="td">www.bjhd.c…</div>
<div class="td">运输/物流</div>
<div class="td">A（重点客…</div>
<div class="td">--</div>
<div class="td">测试</div>
<div class="td"><svg class="st" viewBox="0 0 12 12"><circle cx="6" cy="6" r="6" fill="#f5505a"/><path d="M3.7 3.7l4.6 4.6M8.3 3.7L3.7 8.3" stroke="#fff" stroke-width="1.3" stroke-linecap="round"/></svg><span>未成交</span></div>
<div class="td">20</div>
<div class="td">--</div>
<div class="td">admin</div>
<div class="td">2019-11-20…</div>
<div class="td">2019-11-12…</div>
<div class="td">admin</div>
</div>
<div class="tr stripe">
<div class="td c0"><span class="cb"></span></div>
<div class="td c1"></div>
<div class="td lk">北天堂有限…</div>
<div class="td">线上注册</div>
<div class="td">145555956…</div>
<div class="td">7777777</div>
<div class="td">www.btt.com</div>
<div class="td">政府</div>
<div class="td">A（重点客…</div>
<div class="td">2019-11-21…</div>
<div class="td">测试</div>
<div class="td"><svg class="st" viewBox="0 0 12 12"><circle cx="6" cy="6" r="6" fill="#f5505a"/><path d="M3.7 3.7l4.6 4.6M8.3 3.7L3.7 8.3" stroke="#fff" stroke-width="1.3" stroke-linecap="round"/></svg><span>未成交</span></div>
<div class="td">20</div>
<div class="td">--</div>
<div class="td">admin</div>
<div class="td">2019-11-20…</div>
<div class="td">2019-11-12…</div>
<div class="td">admin</div>
</div>
<div class="tr">
<div class="td c0"><span class="cb"></span></div>
<div class="td c1"></div>
<div class="td lk">上山有限公司</div>
<div class="td">线上询价</div>
<div class="td">186256583…</div>
<div class="td">254685</div>
<div class="td">www.shan…</div>
<div class="td">商业服务</div>
<div class="td">A（重点客…</div>
<div class="td">2019-11-20…</div>
<div class="td">测试</div>
<div class="td"><svg class="st" viewBox="0 0 12 12"><circle cx="6" cy="6" r="6" fill="#f5505a"/><path d="M3.7 3.7l4.6 4.6M8.3 3.7L3.7 8.3" stroke="#fff" stroke-width="1.3" stroke-linecap="round"/></svg><span>未成交</span></div>
<div class="td">20</div>
<div class="td">--</div>
<div class="td">admin</div>
<div class="td">2019-11-20…</div>
<div class="td">2019-11-12…</div>
<div class="td">admin</div>
</div>
<div class="tr stripe sel">
<div class="td c0"><span class="cb chk"></span></div>
<div class="td c1"><svg class="dollar2" viewBox="0 0 14 14"><circle cx="7" cy="7" r="7" fill="#ff6f47"/><text x="7" y="10.8" font-size="10.5" text-anchor="middle" fill="#fff" font-family="Liberation Sans, sans-serif">$</text></svg></div>
<div class="td lk">A1</div>
<div class="td">广告</div>
<div class="td">183395656…</div>
<div class="td">2545312</div>
<div class="td">www.A1.com</div>
<div class="td">房地产</div>
<div class="td">B（普通客…</div>
<div class="td">2019-11-15…</div>
<div class="td">测试</div>
<div class="td"><svg class="st" viewBox="0 0 12 12"><circle cx="6" cy="6" r="6" fill="#20b559"/><path d="M3.2 6.2l2 2 3.6-3.9" stroke="#fff" stroke-width="1.4" fill="none" stroke-linecap="round" stroke-linejoin="round"/></svg><span>已成交</span></div>
<div class="td"></div>
<div class="td">2019-11-15…</div>
<div class="td">admin</div>
<div class="td">2019-11-20…</div>
<div class="td">2019-11-12…</div>
<div class="td">admin</div>
</div>
<div class="tr">
<div class="td c0"><span class="cb"></span></div>
<div class="td c1"></div>
<div class="td lk">新宇宙有限…</div>
<div class="td">线上注册</div>
<div class="td">159696255…</div>
<div class="td">965685</div>
<div class="td">www.cs28.…</div>
<div class="td">金融业</div>
<div class="td">B（普通客…</div>
<div class="td">2019-11-19…</div>
<div class="td">测试</div>
<div class="td"><svg class="st" viewBox="0 0 12 12"><circle cx="6" cy="6" r="6" fill="#f5505a"/><path d="M3.7 3.7l4.6 4.6M8.3 3.7L3.7 8.3" stroke="#fff" stroke-width="1.3" stroke-linecap="round"/></svg><span>未成交</span></div>
<div class="td"></div>
<div class="td">2019-11-19…</div>
<div class="td">荒</div>
<div class="td">2019-11-11…</div>
<div class="td">2019-11-11…</div>
<div class="td">荒</div>
</div>
<div class="tr stripe">
<div class="td c0"><span class="cb"></span></div>
<div class="td c1"></div>
<div class="td lk">O</div>
<div class="td">电话咨询</div>
<div class="td">198765410…</div>
<div class="td">987667</div>
<div class="td">www.cs14.…</div>
<div class="td">文化传媒</div>
<div class="td">C（非优先…</div>
<div class="td">--</div>
<div class="td">测试</div>
<div class="td"><svg class="st" viewBox="0 0 12 12"><circle cx="6" cy="6" r="6" fill="#f5505a"/><path d="M3.7 3.7l4.6 4.6M8.3 3.7L3.7 8.3" stroke="#fff" stroke-width="1.3" stroke-linecap="round"/></svg><span>未成交</span></div>
<div class="td"></div>
<div class="td">--</div>
<div class="td">昊</div>
<div class="td">2019-11-11…</div>
<div class="td">2019-11-09…</div>
<div class="td">昊</div>
</div>
<div class="tr">
<div class="td c0"><span class="cb"></span></div>
<div class="td c1"></div>
<div class="td lk">P</div>
<div class="td">电话咨询</div>
<div class="td">198765410…</div>
<div class="td">987668</div>
<div class="td">www.cs15.…</div>
<div class="td">政府</div>
<div class="td">C（非优先…</div>
<div class="td">--</div>
<div class="td">测试</div>
<div class="td"><svg class="st" viewBox="0 0 12 12"><circle cx="6" cy="6" r="6" fill="#f5505a"/><path d="M3.7 3.7l4.6 4.6M8.3 3.7L3.7 8.3" stroke="#fff" stroke-width="1.3" stroke-linecap="round"/></svg><span>未成交</span></div>
<div class="td"></div>
<div class="td">--</div>
<div class="td">昊</div>
<div class="td">2019-11-11…</div>
<div class="td">2019-11-09…</div>
<div class="td">昊</div>
</div>
  </div>
  <div id="fixr"><div class="h"></div><svg class="seticon" viewBox="0 0 12 12"><path fill="none" stroke="#9ba6c4" stroke-width="1.4" d="M3.5 11V1.5M1 4l2.5-2.5L6 4M8.5 1v9.5M6 8l2.5 2.5L11 8"/></svg><div class="tr"></div><div class="tr stripe"></div><div class="tr"></div><div class="tr stripe"></div><div class="tr"></div><div class="tr stripe"></div><div class="tr"></div><div class="tr stripe"></div><div class="tr"></div><div class="tr stripe"></div><div class="tr"></div><div class="tr stripe sel2"></div><div class="tr"></div><div class="tr stripe"></div><div class="tr"></div></div>
  <div id="sbar"><i></i></div>
  <div id="pg">
    <div class="pb" style="left:1132px"><svg viewBox="0 0 8 10"><path fill="none" stroke="#c0c4cc" stroke-width="1.3" d="M6 .8L1.8 5 6 9.2"/></svg></div>
    <div class="pb on" style="left:1172px">1</div>
    <div class="pb" style="left:1212px">2</div>
    <div class="pb" style="left:1252px">3</div>
    <div class="pb" style="left:1292px"><svg viewBox="0 0 8 10"><path fill="none" stroke="#555" stroke-width="1.2" d="M2 .8L6.2 5 2 9.2"/></svg></div>
    <div id="psel">15条/页<svg viewBox="0 0 10 7"><path fill="none" stroke="#c0c4cc" stroke-width="1.1" d="M1 1.2l4 4 4-4"/></svg></div>
    <div id="ptotal">共 39 条</div>
    <div id="pgo">前往</div>
    <div id="pinp">1</div>
    <div id="pye">页</div>
  </div>
</div>

<div id="pop">
  <div class="arrow"></div>
  <div class="pi" style="top:9px"><svg viewBox="0 0 13 14"><path fill="#555" d="M1.6 0h5.6v2.5H3.5v9h3.7V14H1.6A1.3 1.3 0 0 1 .3 12.7V1.3A1.3 1.3 0 0 1 1.6 0zM4.8 7l4.2-4v2.4h3.6v3.2H9V11z"/></svg>导入</div>
  <div class="pi on" style="top:48px"><svg viewBox="0 0 13 14"><path fill="#4a78f5" d="M1.6 0h5.6v2.5H3.5v9h3.7V14H1.6A1.3 1.3 0 0 1 .3 12.7V1.3A1.3 1.3 0 0 1 1.6 0zM13 7l-4.2 4V8.6H5.4V5.4h3.4V3z"/></svg>导出</div>
</div>
</body>
</html>
